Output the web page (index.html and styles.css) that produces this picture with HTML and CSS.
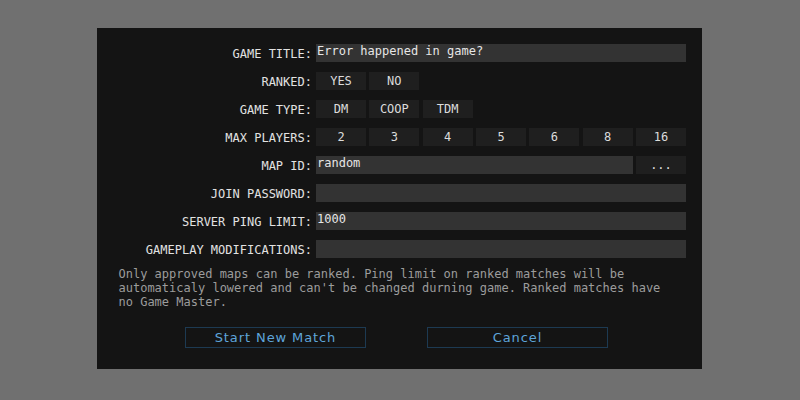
FILE: index.html
```html
<!DOCTYPE html>
<html>
<head>
<meta charset="utf-8">
<link rel="stylesheet" href="styles.css">
</head>
<body>
<div class="dialog">
  <div class="rows">
    <div class="row">
      <div class="label">GAME TITLE:</div>
      <div class="control"><div class="field">Error happened in game?</div></div>
    </div>
    <div class="row">
      <div class="label">RANKED:</div>
      <div class="control grid7"><div class="btn">YES</div><div class="btn">NO</div></div>
    </div>
    <div class="row">
      <div class="label">GAME TYPE:</div>
      <div class="control grid7"><div class="btn">DM</div><div class="btn">COOP</div><div class="btn">TDM</div></div>
    </div>
    <div class="row">
      <div class="label">MAX PLAYERS:</div>
      <div class="control grid7">
        <div class="btn">2</div><div class="btn">3</div><div class="btn">4</div><div class="btn">5</div><div class="btn">6</div><div class="btn">8</div><div class="btn">16</div>
      </div>
    </div>
    <div class="row">
      <div class="label">MAP ID:</div>
      <div class="control grid7"><div class="field span6">random</div><div class="btn">...</div></div>
    </div>
    <div class="row">
      <div class="label">JOIN PASSWORD:</div>
      <div class="control"><div class="field"></div></div>
    </div>
    <div class="row">
      <div class="label">SERVER PING LIMIT:</div>
      <div class="control"><div class="field">1000</div></div>
    </div>
    <div class="row">
      <div class="label">GAMEPLAY MODIFICATIONS:</div>
      <div class="control"><div class="field"></div></div>
    </div>
  </div>
  <p class="note">Only approved maps can be ranked. Ping limit on ranked matches will be automaticaly lowered and can't be changed durning game. Ranked matches have no Game Master.</p>
  <div class="actions">
    <div class="action">Start New Match</div>
    <div class="action">Cancel</div>
  </div>
</div>
</body>
</html>
```

FILE: styles.css
```css
html, body {
  margin: 0;
  padding: 0;
}
body {
  background: #707070;
  padding-top: 28px;
  font-family: "DejaVu Sans Mono", "Liberation Mono", monospace;
  font-size: 12px;
}
.dialog {
  width: 605px;
  height: 341px;
  margin: 0 0 0 97px;
  background: #141414;
  box-sizing: border-box;
  padding-top: 16px;
}
.rows {
  display: flex;
  flex-direction: column;
  gap: 10px;
}
.row {
  display: flex;
  height: 18px;
  gap: 4px;
}
.label {
  width: 215px;
  text-align: right;
  color: #e2e2e2;
  line-height: 14px;
  padding-top: 3px;
  box-sizing: border-box;
  white-space: nowrap;
}
.control {
  width: 370px;
  height: 18px;
}
.grid7 {
  display: grid;
  grid-template-columns: repeat(7, 1fr);
  column-gap: 3.34px;
}
.field {
  height: 18px;
  background: #333333;
  color: #e6e6e6;
  line-height: 14px;
  padding-left: 1px;
  white-space: nowrap;
  overflow: hidden;
}
.span6 {
  grid-column: span 6;
}
.btn {
  height: 18px;
  background: #1f1f1f;
  color: #dcdcdc;
  line-height: 18px;
  text-align: center;
}
.note {
  margin: 9px 0 0 0;
  padding-left: 21.5px;
  width: 555px;
  color: #9c9c9c;
  line-height: 14px;
}
.actions {
  display: flex;
  gap: 61px;
  padding-left: 88px;
  margin-top: 18px;
}
.action {
  width: 181px;
  height: 21px;
  box-sizing: border-box;
  border: 1px solid #1d3a52;
  color: #5ea4da;
  font-family: "DejaVu Sans", sans-serif;
  font-size: 13px;
  letter-spacing: 0.9px;
  line-height: 19px;
  text-align: center;
}
```
